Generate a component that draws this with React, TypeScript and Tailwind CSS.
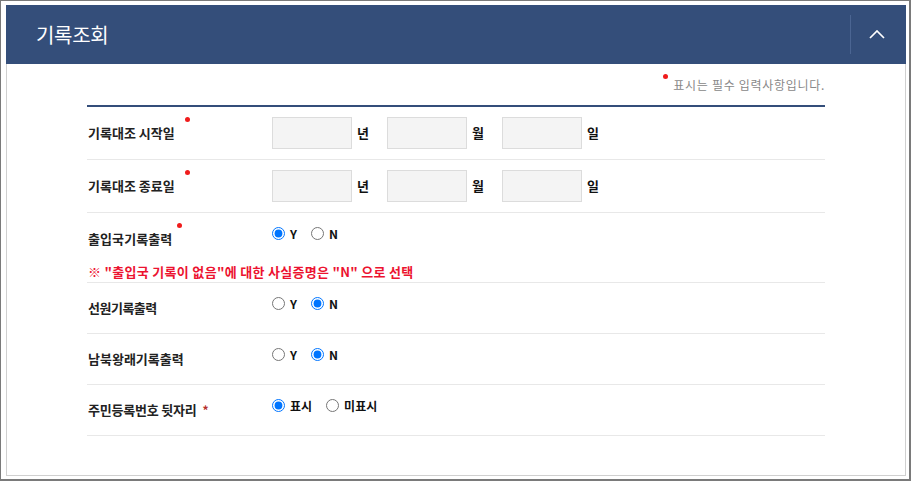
import React from 'react'

function Dot({ ml }: { ml: string }) {
  return <span className={`mt-[10px] size-[5px] shrink-0 self-start rounded-full bg-[#f01c1c] ${ml}`} />
}

function DateInput({ suffix }: { suffix: string }) {
  return (
    <div className="flex w-[115px] items-center">
      <input type="text" className="h-[32px] w-[80px] border border-[#dcdcdc] bg-[#f4f4f4] outline-none" />
      <span className="ml-[5px] text-[13px] font-bold text-[#111]">{suffix}</span>
    </div>
  )
}

function Radio({ name, label, checked }: { name: string; label: string; checked?: boolean }) {
  return (
    <label className="mr-[14px] flex items-center">
      <input type="radio" name={name} defaultChecked={checked} className="m-0 size-[13px]" />
      <span className="ml-[5px] text-[12px] leading-none font-bold text-[#111]">{label}</span>
    </label>
  )
}

export default function App() {
  return (
    <div className="h-[481px] w-[911px] border-t border-r-2 border-b-2 border-l border-[#7a7a7a] bg-white pt-[4px] pr-[3px] pb-[3px] pl-[5px] font-['Noto_Sans_CJK_KR',sans-serif]">
      {/* header */}
      <div className="flex h-[59px] w-[900px] bg-[#344e7a]">
        <div className="flex flex-1 items-center pl-[30px] text-[20px] tracking-[-0.3px] text-white">기록조회</div>
        <div className="h-[39px] w-px self-center bg-[#4b6592]" />
        <div className="flex w-[55px] items-center justify-center pr-[4px]">
          <svg width="16" height="9" viewBox="0 0 16 9" fill="none">
            <polyline points="1,8 8,1 15,8" stroke="white" strokeWidth="1.7" />
          </svg>
        </div>
      </div>

      {/* body */}
      <div className="h-[412px] border-x border-b border-[#d0d0d0] px-[80px]">
        <div className="flex h-[41px] items-start justify-end pt-[10px]">
          <span className="size-[5px] rounded-full bg-[#f01c1c]" />
          <span className="mt-[3px] ml-[5px] text-[12px] leading-[16px] tracking-[0.7px] text-[#888]">표시는 필수 입력사항입니다.</span>
        </div>
        <div className="h-[2px] bg-[#344e7a]" />

        <div className="flex h-[53px] border-b border-[#e8e8e8] pl-px">
          <div className="flex w-[184px] shrink-0 items-center">
            <span className="text-[13px] font-bold tracking-[0px] text-[#222]">기록대조 시작일</span>
            <Dot ml="ml-[10px]" />
          </div>
          <div className="flex items-center">
            <DateInput suffix="년" />
            <DateInput suffix="월" />
            <DateInput suffix="일" />
          </div>
        </div>

        <div className="flex h-[53px] border-b border-[#e8e8e8] pl-px">
          <div className="flex w-[184px] shrink-0 items-center">
            <span className="text-[13px] font-bold tracking-[0px] text-[#222]">기록대조 종료일</span>
            <Dot ml="ml-[10px]" />
          </div>
          <div className="flex items-center">
            <DateInput suffix="년" />
            <DateInput suffix="월" />
            <DateInput suffix="일" />
          </div>
        </div>

        <div className="border-b border-[#e8e8e8] pl-px">
          <div className="flex h-[52px]">
            <div className="flex w-[184px] shrink-0 items-center">
              <span className="text-[13px] font-bold tracking-[0.1px] text-[#222]">출입국기록출력</span>
              <Dot ml="ml-[5px]" />
            </div>
            <div className="flex items-start pt-[14px]">
              <Radio name="immig" label="Y" checked />
              <Radio name="immig" label="N" />
            </div>
          </div>
          <div className="h-[17px] text-[13px] leading-[14px] font-bold tracking-[0.3px] text-[#ec1330]">
            ※ "출입국 기록이 없음"에 대한 사실증명은 "N" 으로 선택
          </div>
        </div>

        <div className="flex h-[51px] border-b border-[#e8e8e8] pl-px">
          <div className="flex w-[184px] shrink-0 items-center">
            <span className="text-[13px] font-bold tracking-[-0.5px] text-[#222]">선원기록출력</span>
          </div>
          <div className="flex items-start pt-[14px]">
            <Radio name="seaman" label="Y" />
            <Radio name="seaman" label="N" checked />
          </div>
        </div>

        <div className="flex h-[51px] border-b border-[#e8e8e8] pl-px">
          <div className="flex w-[184px] shrink-0 items-center">
            <span className="text-[13px] font-bold text-[#222]">남북왕래기록출력</span>
          </div>
          <div className="flex items-start pt-[14px]">
            <Radio name="nk" label="Y" />
            <Radio name="nk" label="N" checked />
          </div>
        </div>

        <div className="flex h-[51px] border-b border-[#e8e8e8] pl-px">
          <div className="flex w-[184px] shrink-0 items-center">
            <span className="text-[13px] font-bold tracking-[-0.2px] text-[#222]">주민등록번호 뒷자리</span>
            <span className="ml-[6px] text-[12px] font-bold text-[#b5302a]">*</span>
          </div>
          <div className="flex items-start pt-[14px]">
            <Radio name="rrn" label="표시" checked />
            <Radio name="rrn" label="미표시" />
          </div>
        </div>
      </div>
    </div>
  )
}
